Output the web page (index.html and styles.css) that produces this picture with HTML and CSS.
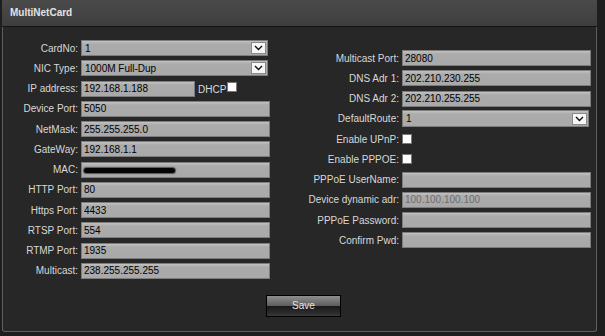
FILE: index.html
```html
<!DOCTYPE html>
<html lang="en">
<head>
  <meta charset="UTF-8">
  <title>MultiNetCard</title>
  <link rel="stylesheet" href="styles.css">
</head>
<body>

<div class="panel">
  <div class="panel-head">MultiNetCard</div>
  <div class="panel-body">
    <div class="form">
      <div class="col col-left">
        <label>CardNo:</label>
        <div class="select"><span class="value">1</span><span class="drop"><svg width="9" height="6" viewBox="0 0 9 6"><path d="M1 1 L4.5 4.5 L8 1" fill="none" stroke="#111" stroke-width="1.4"/></svg></span></div>

        <label>NIC Type:</label>
        <div class="select"><span class="value">1000M Full-Dup</span><span class="drop"><svg width="9" height="6" viewBox="0 0 9 6"><path d="M1 1 L4.5 4.5 L8 1" fill="none" stroke="#111" stroke-width="1.4"/></svg></span></div>

        <label>IP address:</label>
        <div class="inline">
          <input class="short" type="text" value="192.168.1.188">
          <span class="tag">DHCP</span><span class="check"></span>
        </div>

        <label>Device Port:</label>
        <input type="text" value="5050">

        <label>NetMask:</label>
        <input type="text" value="255.255.255.0">

        <label>GateWay:</label>
        <input type="text" value="192.168.1.1">

        <label>MAC:</label>
        <div class="field"><span class="redact"></span></div>

        <label>HTTP Port:</label>
        <input type="text" value="80">

        <label>Https Port:</label>
        <input type="text" value="4433">

        <label>RTSP Port:</label>
        <input type="text" value="554">

        <label>RTMP Port:</label>
        <input type="text" value="1935">

        <label>Multicast:</label>
        <input type="text" value="238.255.255.255">
      </div>

      <div class="col col-right">
        <label>Multicast Port:</label>
        <input type="text" value="28080">

        <label>DNS Adr 1:</label>
        <input type="text" value="202.210.230.255">

        <label>DNS Adr 2:</label>
        <input type="text" value="202.210.255.255">

        <label>DefaultRoute:</label>
        <div class="select wide"><span class="value">1</span><span class="drop"><svg width="9" height="6" viewBox="0 0 9 6"><path d="M1 1 L4.5 4.5 L8 1" fill="none" stroke="#111" stroke-width="1.4"/></svg></span></div>

        <label>Enable UPnP:</label>
        <div class="inline"><span class="check"></span></div>

        <label>Enable PPPOE:</label>
        <div class="inline"><span class="check"></span></div>

        <label>PPPoE UserName:</label>
        <input type="text" value="">

        <label>Device dynamic adr:</label>
        <input type="text" value="100.100.100.100" disabled>

        <label>PPPoE Password:</label>
        <input type="password" value="">

        <label>Confirm Pwd:</label>
        <input type="password" value="">
      </div>
    </div>

    <div class="actions">
      <button class="save">Save</button>
    </div>
  </div>
</div>

</body>
</html>
```

FILE: styles.css
```css
body {
  margin: 0;
  background: #1e1e1e;
  font-family: "Liberation Sans", Arial, sans-serif;
  font-size: 10px;
  color: #dcdcdc;
}

.panel {
  margin-left: 2px;
  width: 595px;
  height: 332px;
  box-sizing: border-box;
  border: 1px solid #5e5e5e;
  border-top: none;
  border-radius: 0 0 3px 3px;
  background: #272727;
  display: flex;
  flex-direction: column;
}

.panel-head {
  height: 26px;
  line-height: 26px;
  padding-left: 8px;
  margin: 0 -1px;
  background: linear-gradient(#4a4a4a, #3e3e3e);
  border-bottom: 1px solid #141414;
  font-weight: bold;
  color: #e2e2e2;
}

.panel-body {
  padding-top: 13px;
}

.form {
  display: flex;
  align-items: flex-start;
}

.col {
  display: grid;
  grid-auto-rows: 16px;
  column-gap: 3px;
  row-gap: 4.27px;
  align-items: center;
}

.col-left {
  grid-template-columns: 75px 189px;
}

.col-right {
  grid-template-columns: 100px 189px;
  margin-left: 29px;
  margin-top: 10px;
}

label {
  text-align: right;
  white-space: nowrap;
  color: #d8d8d8;
}

input, .field, .select {
  height: 16px;
  box-sizing: border-box;
  margin: 0;
  padding: 0 2px;
  border: 1px solid #7c7c7c;
  background: linear-gradient(#c2c2c2, #ababab 3px, #a9a9a9);
  font-family: "Liberation Sans", Arial, sans-serif;
  font-size: 10px;
  color: #000;
  outline: none;
}

input {
  width: 189px;
}

input:disabled {
  color: #6e6e6e;
}

input.short {
  width: 114px;
}

.field {
  display: flex;
  align-items: center;
}

.redact {
  width: 91px;
  height: 5px;
  margin-top: 1px;
  border-radius: 3px;
  background: #050505;
  box-shadow: 0 0 1px 1px rgba(0, 0, 0, 0.5);
}

.select {
  width: 187px;
  display: flex;
  align-items: center;
  padding-right: 1px;
}

.select.wide {
  height: 17px;
}

.select .value {
  flex: 1;
  padding-left: 1px;
}

.drop {
  width: 15px;
  height: 12px;
  box-sizing: border-box;
  border: 1px solid #8a8a8a;
  background: #f6f6f6;
  display: flex;
  align-items: center;
  justify-content: center;
}

.inline {
  display: flex;
  align-items: center;
}

.tag {
  margin-left: 3px;
  margin-top: 1px;
  color: #dcdcdc;
}

.check {
  width: 10px;
  height: 10px;
  box-sizing: border-box;
  border: 1px solid #777;
  background: #fff;
}

.tag + .check {
  margin-left: 1px;
  margin-top: -3px;
}

.actions {
  display: flex;
  justify-content: center;
  padding-left: 8px;
  margin-top: 16px;
}

.save {
  width: 75px;
  height: 22px;
  border: 1px solid #000;
  background: linear-gradient(#8e8e8e, #5e5e5e 48%, #1a1a1a 52%, #2c2c2c 85%, #3a3a3a);
  color: #e6e6e6;
  font-family: "Liberation Sans", Arial, sans-serif;
  font-size: 10px;
  cursor: pointer;
}
```
